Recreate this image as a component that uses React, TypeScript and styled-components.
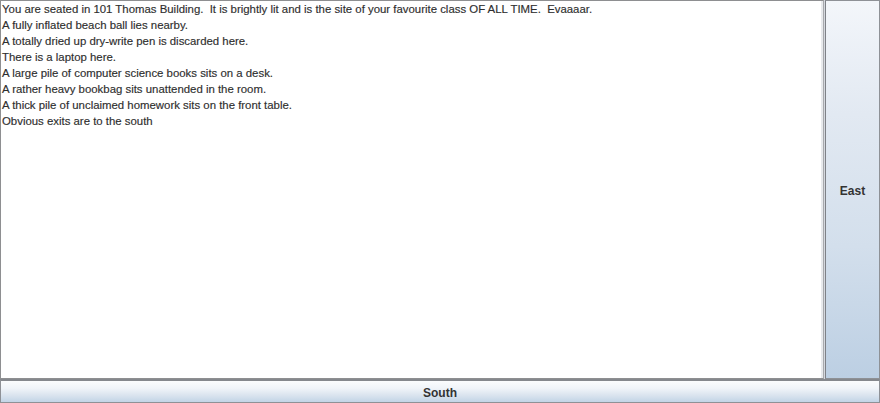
import React from "react";
import styled, { createGlobalStyle } from "styled-components";

const Global = createGlobalStyle`
  html, body { margin: 0; padding: 0; background: #d6d9df; }
  #root { width: 880px; height: 403px; }
`;

const Frame = styled.div`
  width: 880px;
  height: 403px;
  display: grid;
  grid-template-columns: 1fr 56px;
  grid-template-rows: 1fr 24px;
  font-family: "Liberation Sans", Arial, sans-serif;
`;

const TextArea = styled.div`
  grid-column: 1;
  grid-row: 1;
  background: #ffffff;
  border: 1px solid #8e8f91;
  border-right: 1px solid #a7a9ad;
  box-shadow: inset -2px 0 0 #e8eaed;
  padding: 0 0 0 1px;
  font-size: 11.4px;
  line-height: 16px;
  color: #2e2e2e;
  white-space: pre;
  overflow: hidden;
  -webkit-text-stroke: 0.15px #2e2e2e;
`;

const Line = styled.div`
  height: 16px;
`;

const NimbusButton = styled.div<{ $vertical?: boolean }>`
  display: flex;
  align-items: center;
  justify-content: center;
  font-weight: bold;
  font-size: 12px;
  color: #333333;
  border: 1px solid #8e9196;
  background: ${(p) =>
    p.$vertical
      ? "linear-gradient(to bottom, #f3f6fa 0%, #e2e9f2 30%, #d3dfec 65%, #bccfe3 100%)"
      : "linear-gradient(to bottom, #fbfcfd 0%, #f0f4f9 35%, #d9e3ee 70%, #c2d4e6 100%)"};
`;

const EastButton = styled(NimbusButton)`
  grid-column: 2;
  grid-row: 1;
  border-left: 1px solid #7e8187;
  margin-left: 1px;
  padding-top: 3px;
`;

const SouthButton = styled(NimbusButton)`
  grid-column: 1 / 3;
  grid-row: 2;
  border-top: 2px solid #85888d;
  padding-top: 3px;
`;

const lines = [
  "You are seated in 101 Thomas Building.  It is brightly lit and is the site of your favourite class OF ALL TIME.  Evaaaar.",
  "A fully inflated beach ball lies nearby.",
  "A totally dried up dry-write pen is discarded here.",
  "There is a laptop here.",
  "A large pile of computer science books sits on a desk.",
  "A rather heavy bookbag sits unattended in the room.",
  "A thick pile of unclaimed homework sits on the front table.",
  "Obvious exits are to the south",
];

export default function App() {
  return (
    <>
      <Global />
      <Frame>
        <TextArea>
          {lines.map((l, i) => (
            <Line key={i}>{l}</Line>
          ))}
        </TextArea>
        <EastButton $vertical>East</EastButton>
        <SouthButton>South</SouthButton>
      </Frame>
    </>
  );
}
